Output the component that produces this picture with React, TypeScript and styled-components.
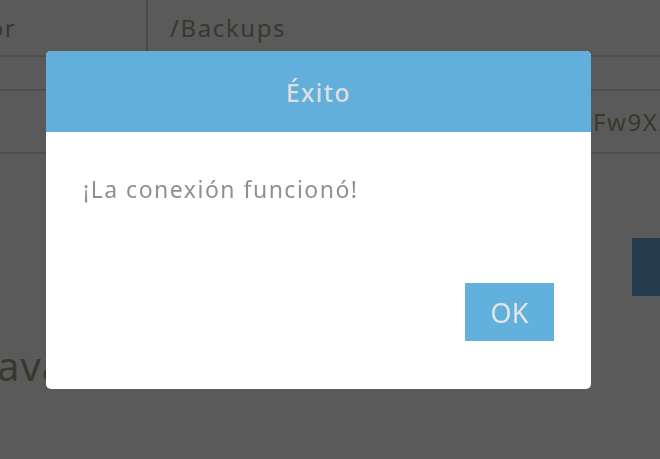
import React from "react";
import styled, { createGlobalStyle } from "styled-components";

const Global = createGlobalStyle`
  html, body { margin: 0; padding: 0; background: #5a5a5a; overflow: hidden; }
  body { font-family: "Noto Sans", "Open Sans", sans-serif; }
  * { box-sizing: border-box; }
`;

const Page = styled.div`
  width: 660px;
  height: 459px;
  overflow: hidden;
  display: flex;
  flex-direction: column;
  color: #37392d;
`;

const Table = styled.div`
  display: grid;
  grid-template-columns: 148px 1fr;
`;

const Row = styled.div<{ $h: number }>`
  display: contents;
  & > div { height: ${(p) => p.$h}px; border-bottom: 2px solid #4e4e4e; }
`;

const LabelCell = styled.div`
  border-right: 2px solid #474747;
  overflow: hidden;
  white-space: nowrap;
  display: flex;
  align-items: center;
  font-size: 24px;
  letter-spacing: 1.5px;
`;

const CutLabel = styled.span`
  flex-shrink: 0;
  margin-left: -90px;
`;

const ValueCell = styled.div`
  display: flex;
  align-items: center;
  padding-left: 22px;
  font-size: 24px;
  letter-spacing: 1.6px;
  white-space: nowrap;
  overflow: hidden;
`;

const ValueText = styled.span`
  flex-shrink: 0;
`;

const Hidden = styled.span<{ $w: number }>`
  flex-shrink: 0;
  width: ${(p) => p.$w}px;
`;

const ButtonRow = styled.div`
  display: flex;
  justify-content: flex-end;
  margin-top: 84px;
  margin-right: -120px;
`;

const DarkButton = styled.div`
  width: 148px;
  height: 58px;
  background: #243c4d;
`;

const Heading = styled.div`
  margin-top: 42px;
  margin-left: -3px;
  font-size: 40px;
  letter-spacing: 1px;
  white-space: nowrap;
`;

const Modal = styled.div`
  position: fixed;
  left: 46px;
  top: 51px;
  width: 545px;
  height: 338px;
  background: #ffffff;
  border-radius: 5px;
  overflow: hidden;
  display: flex;
  flex-direction: column;
`;

const ModalHeader = styled.div`
  height: 81px;
  background: #62afdc;
  display: flex;
  align-items: center;
  justify-content: center;
  color: #dedede;
  font-size: 25px;
  font-weight: 500;
  letter-spacing: 1.2px;
`;

const ModalBody = styled.div`
  flex: 1;
  padding: 42px 37px 0;
  color: #8c9196;
  font-size: 23px;
  letter-spacing: 1.5px;
  line-height: 30px;
  white-space: nowrap;
`;

const ModalFooter = styled.div`
  display: flex;
  justify-content: flex-end;
  padding: 0 37px 48px;
`;

const OkButton = styled.button`
  width: 89px;
  height: 58px;
  border: none;
  background: #62b0dc;
  color: #e6e6e6;
  font-family: inherit;
  font-size: 27px;
  padding: 0;
`;

export default function App() {
  return (
    <>
      <Global />
      <Page>
        <Table>
          <Row $h={57}>
            <LabelCell><CutLabel>Servidor</CutLabel></LabelCell>
            <ValueCell><ValueText>/Backups</ValueText></ValueCell>
          </Row>
          <Row $h={34}>
            <LabelCell />
            <ValueCell />
          </Row>
          <Row $h={63}>
            <LabelCell />
            <ValueCell><Hidden $w={423} /><ValueText>Fw9X2kLp</ValueText></ValueCell>
          </Row>
        </Table>
        <ButtonRow>
          <DarkButton />
        </ButtonRow>
        <Heading>avanzado</Heading>
      </Page>
      <Modal>
        <ModalHeader>Éxito</ModalHeader>
        <ModalBody>¡La conexión funcionó!</ModalBody>
        <ModalFooter>
          <OkButton>OK</OkButton>
        </ModalFooter>
      </Modal>
    </>
  );
}
